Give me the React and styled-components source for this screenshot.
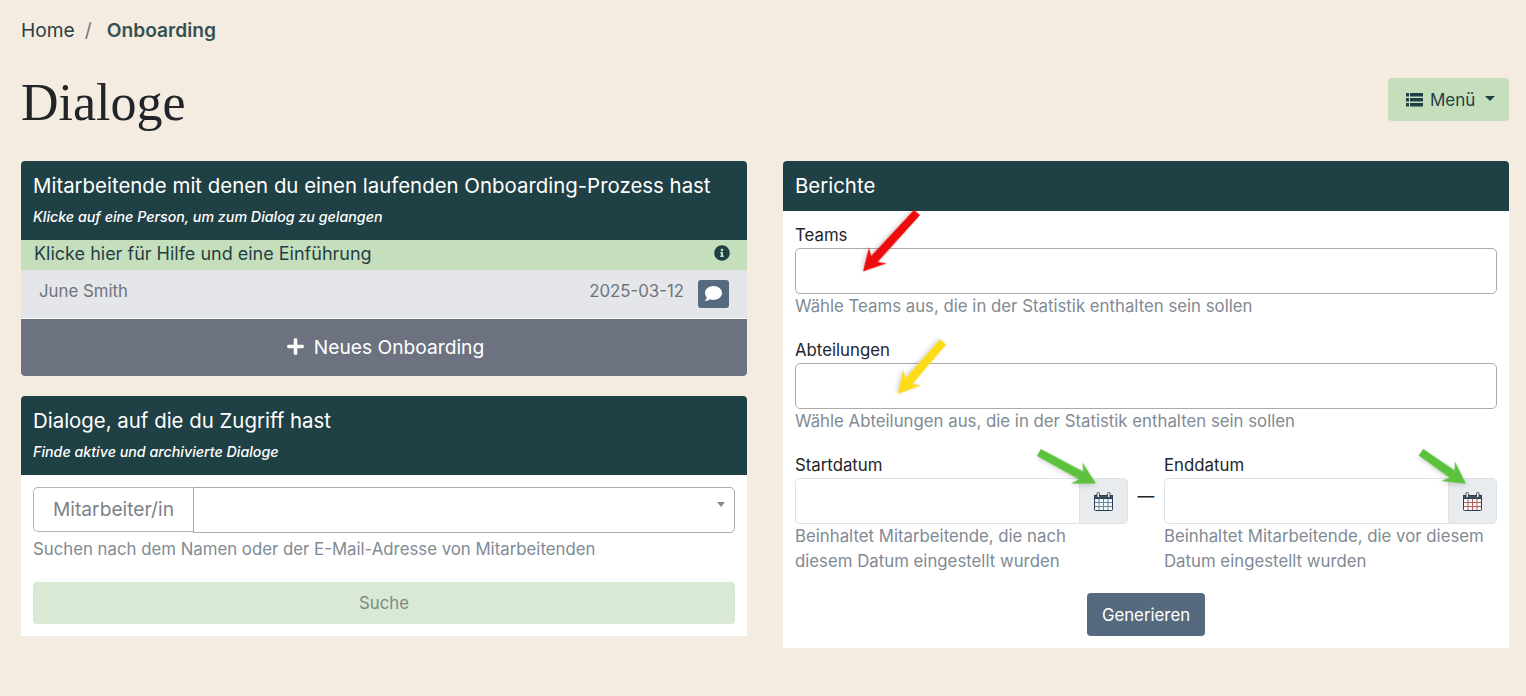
import styled, { createGlobalStyle } from "styled-components";
import { FaInfoCircle, FaComment, FaPlus } from "react-icons/fa";

const GlobalStyle = createGlobalStyle`
  html, body { margin: 0; padding: 0; }
  body {
    background: #f4ece1;
    font-family: "Inter", "Liberation Sans", sans-serif;
    color: #212529;
  }
  * { box-sizing: border-box; }
`;

function ListIcon() {
  return (
    <svg width="17" height="14" viewBox="0 0 17 14" fill="currentColor">
      <path d="M0 0H3V3.5H0ZM4 0H17V3.5H4ZM0 5H3V8.5H0ZM4 5H17V8.5H4ZM0 10H3V13.5H0ZM4 10H17V13.5H4Z" />
    </svg>
  );
}

function CalendarIcon({ grid }) {
  return (
    <svg width="19" height="19" viewBox="0 0 19 19">
      <rect x="0.5" y="3.5" width="18" height="15" rx="1" fill="#f4f6f8" stroke="#2c3e50" />
      <rect x="0.5" y="3.5" width="18" height="3" fill="#3f5263" stroke="#2c3e50" />
      <rect x="3" y="0.5" width="2.5" height="5" rx="1" fill="#e9ecef" stroke="#2c3e50" strokeWidth="0.9" />
      <rect x="13.5" y="0.5" width="2.5" height="5" rx="1" fill="#e9ecef" stroke="#2c3e50" strokeWidth="0.9" />
      <path d="M1 10.5H18M1 14.5H18M5 7V18M9.5 7V18M14 7V18" stroke={grid} strokeWidth="1" fill="none" />
    </svg>
  );
}

// annotation arrow drawn pointing right, turned to the angle it has in the picture
function Arrow({ color, x, y, rotate, length }) {
  const l = length;
  return (
    <ArrowMark $x={x} $y={y} width={l} height="30" viewBox={`0 0 ${l} 30`} style={{ transform: `rotate(${rotate}deg)` }}>
      <path d={`M0 11L${l - 17} 10.5L${l - 22} 3L${l} 15L${l - 22} 27L${l - 17} 19.5L0 19Z`} fill={color} />
    </ArrowMark>
  );
}

export default function App() {
  return (
    <Page>
      <GlobalStyle />
      <Crumbs>
        <span>Home</span>
        <Slash>/</Slash>
        <strong>Onboarding</strong>
      </Crumbs>
      <TitleRow>
        <PageTitle>Dialoge</PageTitle>
        <MenuButton><ListIcon /> Menü <Caret /></MenuButton>
      </TitleRow>
      <Columns>
        <Column>
          <Card>
            <CardHead>
              <CardTitle>Mitarbeitende mit denen du einen laufenden Onboarding-Prozess hast</CardTitle>
              <CardSub>Klicke auf eine Person, um zum Dialog zu gelangen</CardSub>
            </CardHead>
            <HelpRow>
              <span>Klicke hier für Hilfe und eine Einführung</span>
              <FaInfoCircle size={16} />
            </HelpRow>
            <PersonRow>
              <span>June Smith</span>
              <PersonRight>
                <span>2025-03-12</span>
                <ChatButton><FaComment size={17} /></ChatButton>
              </PersonRight>
            </PersonRow>
            <NewButton><FaPlus size={19} /> Neues Onboarding</NewButton>
          </Card>
          <Card>
            <CardHead>
              <CardTitle>Dialoge, auf die du Zugriff hast</CardTitle>
              <CardSub>Finde aktive und archivierte Dialoge</CardSub>
            </CardHead>
            <SearchBody>
              <SelectGroup>
                <SelectLabel>Mitarbeiter/in</SelectLabel>
                <SelectBox><SelectCaret /></SelectBox>
              </SelectGroup>
              <SearchHint>Suchen nach dem Namen oder der E-Mail-Adresse von Mitarbeitenden</SearchHint>
              <SearchButton>Suche</SearchButton>
            </SearchBody>
          </Card>
        </Column>
        <Column>
          <Card>
            <CardHead $compact>
              <CardTitle>Berichte</CardTitle>
            </CardHead>
            <ReportBody>
              <Field>
                <Label>Teams</Label>
                <TextBox />
                <Hint>Wähle Teams aus, die in der Statistik enthalten sein sollen</Hint>
                <Arrow color="#ec0c0c" x={55} y={4} rotate={132.5} length={80} />
              </Field>
              <Field>
                <Label>Abteilungen</Label>
                <TextBox />
                <Hint>Wähle Abteilungen aus, die in der Statistik enthalten sein sollen</Hint>
                <Arrow color="#fddc17" x={91} y={15} rotate={131} length={69} />
              </Field>
              <DateRow>
                <DateField>
                  <Label>Startdatum</Label>
                  <DateGroup>
                    <DateInput />
                    <DateAddon><CalendarIcon grid="#5c8f9c" /></DateAddon>
                  </DateGroup>
                  <Hint>Beinhaltet Mitarbeitende, die nach diesem Datum eingestellt wurden</Hint>
                  <Arrow color="#5cc13c" x={240} y={0} rotate={28.5} length={65} />
                </DateField>
                <Dash>—</Dash>
                <DateField>
                  <Label>Enddatum</Label>
                  <DateGroup>
                    <DateInput />
                    <DateAddon><CalendarIcon grid="#b5605f" /></DateAddon>
                  </DateGroup>
                  <Hint>Beinhaltet Mitarbeitende, die vor diesem Datum eingestellt wurden</Hint>
                  <Arrow color="#5cc13c" x={252} y={0} rotate={35} length={55} />
                </DateField>
              </DateRow>
              <GenerateWrap><GenerateButton>Generieren</GenerateButton></GenerateWrap>
            </ReportBody>
          </Card>
        </Column>
      </Columns>
    </Page>
  );
}

const Page = styled.div`
  padding: 16px 17px 0 21px;
  height: 696px;
  overflow: hidden;
`;
const Crumbs = styled.div`
  display: flex;
  align-items: center;
  height: 28px;
  font-size: 19.2px;
  color: #2b4045;
  strong { font-weight: 600; color: #36504f; }
`;
const Slash = styled.span`
  padding: 0 15px 0 10px;
  color: #6c757d;
`;
const TitleRow = styled.div`
  display: flex;
  justify-content: space-between;
  align-items: flex-start;
  margin-top: 27px;
  height: 64px;
`;
const PageTitle = styled.h1`
  margin: 0;
  font-family: "Liberation Serif", serif;
  font-weight: 400;
  font-size: 52px;
  line-height: 64px;
  color: #212529;
`;
const MenuButton = styled.button`
  display: flex;
  align-items: center;
  gap: 7px;
  width: 121px;
  height: 43px;
  margin-top: 7px;
  padding: 0 0 0 18px;
  border: 0;
  border-radius: 4px;
  background: #c5dfbd;
  color: #1f4045;
  font: 400 17px "Inter", sans-serif;
`;
const Caret = styled.span`
  width: 0;
  height: 0;
  margin-left: 3px;
  margin-bottom: 3px;
  border-top: 5px solid #1f4045;
  border-left: 5px solid transparent;
  border-right: 5px solid transparent;
`;
const Columns = styled.div`
  display: grid;
  grid-template-columns: 726px 726px;
  gap: 36px;
  margin-top: 26px;
`;
const Column = styled.div`
  display: flex;
  flex-direction: column;
  gap: 20px;
`;
const Card = styled.section`
  background: #fff;
  border-radius: 4px 4px 0 0;
  overflow: hidden;
`;
const CardHead = styled.header`
  background: #1f4045;
  color: #fff;
  padding: 11px 12px 0;
  height: ${(p) => (p.$compact ? "50px" : "79px")};
`;
const CardTitle = styled.h2`
  margin: 0;
  font-size: 20.42px;
  font-weight: 400;
  line-height: 28px;
`;
const CardSub = styled.div`
  margin-top: 7px;
  font-size: 14.25px;
  font-style: italic;
  font-weight: 500;
  line-height: 20px;
`;
const HelpRow = styled.div`
  display: flex;
  justify-content: space-between;
  align-items: center;
  height: 30px;
  padding: 0 17px 4px 13px;
  background: #c5dfbd;
  color: #1f4045;
  font-size: 18px;
`;
const PersonRow = styled.div`
  display: flex;
  justify-content: space-between;
  align-items: center;
  height: 48px;
  padding: 0 18px 6px 18px;
  background: #e5e6ea;
  color: #6c757d;
  font-size: 16.8px;
`;
const PersonRight = styled.div`
  display: flex;
  align-items: center;
  gap: 14px;
`;
const ChatButton = styled.span`
  display: flex;
  align-items: center;
  justify-content: center;
  width: 31px;
  height: 28px;
  margin-top: 5px;
  border-radius: 3px;
  background: #566a7f;
  color: #fff;
`;
const NewButton = styled.button`
  display: flex;
  align-items: center;
  justify-content: center;
  gap: 9px;
  width: 100%;
  height: 57px;
  margin-top: 1px;
  padding: 0 0 2px 2px;
  border: 0;
  border-radius: 0 0 4px 4px;
  background: #6c7280;
  color: #fff;
  font: 400 19.2px "Inter", sans-serif;
`;
const SearchBody = styled.div`
  padding: 12px;
`;
const SelectGroup = styled.div`
  display: flex;
  height: 46px;
`;
const SelectLabel = styled.div`
  display: flex;
  align-items: center;
  justify-content: center;
  width: 160px;
  height: 45px;
  padding-bottom: 2px;
  border: 1px solid #b5b5b5;
  border-right: 0;
  border-radius: 5px 0 0 5px;
  color: #7d8288;
  font-size: 19.2px;
`;
const SelectBox = styled.div`
  position: relative;
  flex: 1;
  border: 1px solid #aaa;
  border-radius: 0 5px 5px 0;
`;
const SelectCaret = styled.span`
  position: absolute;
  top: 14px;
  right: 9px;
  border-top: 5px solid #888;
  border-left: 4px solid transparent;
  border-right: 4px solid transparent;
`;
const Hint = styled.div`
  color: #7f8a94;
  font-size: 16.8px;
  line-height: 25.2px;
`;
const SearchHint = styled(Hint)`
  margin-top: 4px;
`;
const SearchButton = styled.button`
  display: block;
  width: 100%;
  height: 42px;
  margin-top: 20px;
  border: 0;
  border-radius: 4px;
  background: #d9e9d4;
  color: #7d8c83;
  font: 400 16.8px "Inter", sans-serif;
`;
const ReportBody = styled.div`
  padding: 12px;
`;
const Field = styled.div`
  position: relative;
  margin-bottom: 18.6px;
`;
const Label = styled.div`
  font-size: 16.8px;
  line-height: 25.2px;
`;
const TextBox = styled.div`
  height: 46px;
  border: 1px solid #aaa;
  border-radius: 5px;
`;
const DateRow = styled.div`
  display: grid;
  grid-template-columns: 333px 36px 333px;
`;
const DateField = styled.div`
  position: relative;
`;
const DateGroup = styled.div`
  display: flex;
  height: 46px;
`;
const DateInput = styled.div`
  flex: 1;
  border: 1px solid #dee2e6;
  border-right: 0;
  border-radius: 5px 0 0 5px;
`;
const DateAddon = styled.div`
  display: flex;
  align-items: center;
  justify-content: center;
  width: 49px;
  border: 1px solid #dee2e6;
  border-radius: 0 5px 5px 0;
  background: #e9ecef;
`;
const Dash = styled.div`
  text-align: center;
  font-size: 16.8px;
  line-height: 25.2px;
  padding-top: 31px;
`;
const GenerateWrap = styled.div`
  display: flex;
  justify-content: center;
  margin-top: 18.6px;
`;
const GenerateButton = styled.button`
  width: 118px;
  height: 43px;
  border: 0;
  border-radius: 4px;
  background: #566a7f;
  color: #fff;
  font: 400 16.8px "Inter", sans-serif;
`;
const ArrowMark = styled.svg`
  position: absolute;
  left: ${(p) => p.$x}px;
  top: ${(p) => p.$y}px;
  transform-origin: center;
  filter: drop-shadow(1px 2px 2px rgba(0, 0, 0, 0.15));
`;
